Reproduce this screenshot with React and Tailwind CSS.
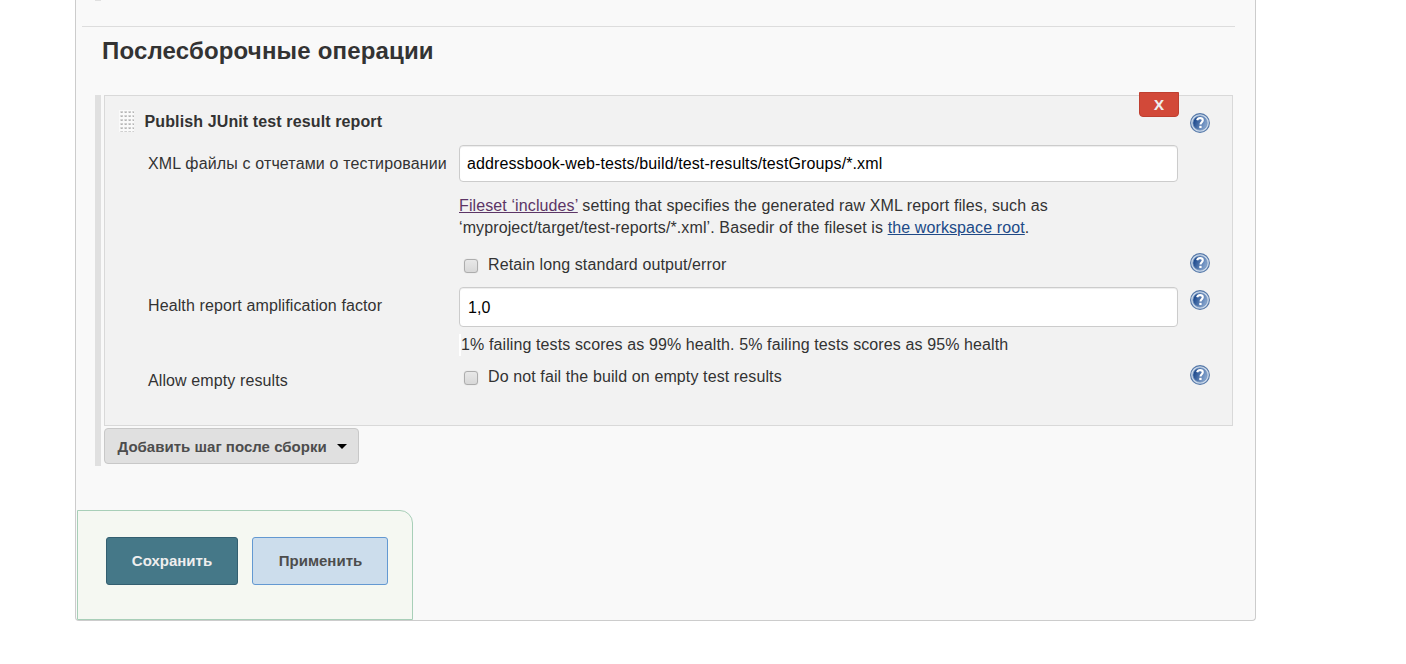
function HelpIcon({ className = "" }) {
  return (
    <svg viewBox="0 0 20 20" className={`h-5 w-5 shrink-0 ${className}`} role="img" aria-label="Help">
      <defs>
        <linearGradient id="helpFill" x1="0" y1="0.3" x2="1" y2="0.7">
          <stop offset="0.1" stopColor="#1f4b8e" />
          <stop offset="1" stopColor="#8fadd4" />
        </linearGradient>
      </defs>
      <circle cx="10" cy="10" r="9.4" fill="#cbd9ea" stroke="#5578a8" strokeWidth="1.1" />
      <circle cx="10" cy="10" r="7.1" fill="url(#helpFill)" stroke="#6f8fbb" strokeWidth="0.8" />
      <path d="M7.2 7.3C7.5 5.8 8.6 5.1 10.1 5.1C11.9 5.1 12.8 6 12.8 7.3C12.8 9.2 10.5 9.3 10.5 11.6" fill="none" stroke="#fff" strokeWidth="2.1" />
      <rect x="9.3" y="12.8" width="2.3" height="2.3" fill="#fff" />
    </svg>
  );
}

function Grip() {
  return (
    <svg viewBox="0 0 15 22" className="h-[22px] w-[15px] shrink-0" aria-hidden="true">
      <defs>
        <pattern id="grip" width="4" height="4" patternUnits="userSpaceOnUse">
          <rect width="4" height="4" fill="#fafafa" />
          <rect x="1" y="1" width="1" height="2" fill="#dedede" />
          <rect x="2" y="1" width="2" height="1" fill="#d0d0d0" />
          <rect x="2" y="2" width="1" height="1" fill="#b4b4b4" />
          <rect x="3" y="2" width="1" height="1" fill="#c8c8c8" />
        </pattern>
      </defs>
      <rect width="15" height="22" fill="url(#grip)" />
    </svg>
  );
}

function Checkbox({ label }) {
  return (
    <label className="flex h-6 items-center leading-[24px]">
      <input
        type="checkbox"
        className="mt-[2px] ml-[5px] h-[14px] w-[14px] appearance-none rounded-[3px] border border-[#adadad] bg-gradient-to-b from-[#e8e8e8] to-[#d8d8d8] shadow-[0_0_1px_rgba(0,0,0,0.2)]"
      />
      <span className="ml-[10px] whitespace-nowrap">{label}</span>
    </label>
  );
}

const field =
  "block w-[719px] rounded-[4px] border border-[#ccc] bg-white text-black shadow-[inset_0_1px_1px_rgba(0,0,0,0.075)] outline-none";

export default function App() {
  return (
    <div className="h-[664px] overflow-hidden bg-white font-['Liberation_Sans',Arial,sans-serif] text-[16px] leading-[22px] tracking-[0.11px] text-[#333]">
      <main className="ml-[75px] flex h-[621px] w-[1181px] flex-col rounded-b-[4px] border border-t-0 border-[#ccc] bg-[#f9f9f9]">
        <div className="ml-[19px] h-px w-1.5 bg-[#e0e0e0]" />
        <hr className="mt-[25px] ml-1.5 w-[1153px] border-t border-[#ddd]" />
        <h2 className="mt-[9px] ml-[26px] h-[30px] text-[24px] leading-[30px] font-bold tracking-[0.17px] whitespace-nowrap">Послесборочные операции</h2>

        <div className="mt-[29px] ml-[19px] flex h-[371px] w-[1138px] border-l-[6px] border-[#e0e0e0] pl-[3px]">
          <div>
            <section className="relative h-[331px] w-[1129px] border border-[#d9d9d9] bg-[#f2f2f2]">
              <button className="absolute -top-1 left-[1034px] h-[25px] w-10 rounded-b-[4px] border border-[#bf3f30] bg-[#d24939] font-['Open_Sans',sans-serif] text-[15px] leading-[23px] font-bold text-[#eee]">X</button>
              <div className="flex h-[49px] pt-[14px] pl-[14px]">
                <Grip />
                <h3 className="ml-[10.5px] w-[1045.5px] pt-px font-bold tracking-[0.12px]">Publish JUnit test result report</h3>
                <HelpIcon className="mt-[3px]" />
              </div>

              <div className="flex">
                <div className="w-[354px] pt-2 pl-[43px] tracking-[0.145px] whitespace-nowrap">XML файлы с отчетами о тестировании</div>
                <div>
                  <div className={`${field} h-[37px] px-[7px] leading-[35px]`}>addressbook-web-tests/build/test-results/testGroups/*.xml</div>
                  <p className="mt-[13px] h-[44px] whitespace-nowrap">
                    <a className="text-[#5c3566] underline">Fileset ‘includes’</a> setting that specifies the generated raw XML report files, such as
                    <br />
                    ‘myproject/target/test-reports/*.xml’. Basedir of the fileset is{" "}
                    <a className="text-[#204a87] underline">the workspace root</a>.
                  </p>
                </div>
              </div>

              <div className="mt-[14px] flex h-[34px]">
                <div className="w-[731px] pl-[354px]"><Checkbox label="Retain long standard output/error" /></div>
                <HelpIcon className="ml-[354px]" />
              </div>

              <div className="flex">
                <div className="w-[354px] pt-2 pl-[43px] whitespace-nowrap">Health report amplification factor</div>
                <div>
                  <div className={`${field} h-[40px] px-2 leading-[40px]`}>1,0</div>
                  <p className="mt-[7px] h-[22px] border-l-2 border-white whitespace-nowrap">1% failing tests scores as 99% health. 5% failing tests scores as 95% health</p>
                </div>
                <HelpIcon className="mt-[3px] ml-3" />
              </div>

              <div className="mt-[9px] flex">
                <div className="w-[354px] pt-[5px] pl-[43px]">Allow empty results</div>
                <div className="w-[731px]"><Checkbox label="Do not fail the build on empty test results" /></div>
                <HelpIcon />
              </div>
            </section>
            <button className="mt-[2px] flex h-[36px] w-[255px] items-center rounded-[4px] border border-[#c8c8c8] bg-[#e0e0e0] pl-[12.5px] text-[15px] font-bold tracking-[0.02px] whitespace-nowrap text-[#4d4d4d]">
              <span className="pt-[2px]">Добавить шаг после сборки</span>
              <span className="ml-[10.5px] border-x-[5px] border-t-[5px] border-x-transparent border-t-black" />
            </button>
          </div>
        </div>

        <footer className="mt-[44px] ml-px flex h-[110px] w-[336px] gap-[14px] rounded-tr-[13px] border border-[#a8cfb8] bg-[#f5f8f2] pt-[26px] pl-[28px] text-[15px] font-bold tracking-normal">
          <button className="h-12 w-[132px] rounded-[3px] border border-[#335f70] bg-[#457888] text-[#eee]">Сохранить</button>
          <button className="h-12 w-[136px] rounded-[3px] border border-[#6399d2] bg-[#ccddec] pl-px text-[#4d4d4d]">Применить</button>
        </footer>
      </main>
    </div>
  );
}
